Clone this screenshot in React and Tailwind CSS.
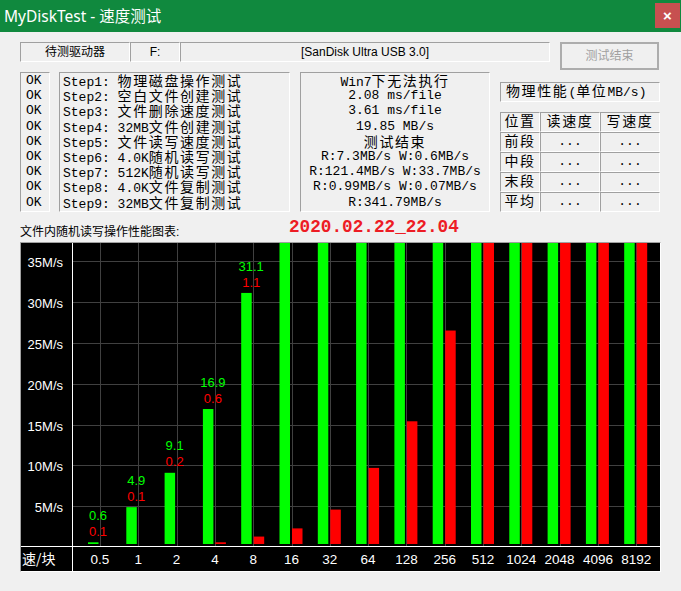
import React from 'react';

// 等宽字体：ASCII 用 Liberation Mono，中文单独放大，模拟宋体的双倍宽度
const CJK = /([\u3400-\u9fff]+)/;

const Mono = ({ text }) =>
  text.split(CJK).map((part, i) =>
    CJK.test(part) ? (
      <span key={i} className="font-['Noto_Sans_CJK_SC',sans-serif] text-[14px] leading-[14px] tracking-[1.6px]">
        {part}
      </span>
    ) : (
      <span key={i}>{part}</span>
    )
  );

const sunken = 'border border-t-[#a0a0a0] border-l-[#a0a0a0] border-b-white border-r-white';

const steps = [
  'Step1: 物理磁盘操作测试',
  'Step2: 空白文件创建测试',
  'Step3: 文件删除速度测试',
  'Step4: 32MB文件创建测试',
  'Step5: 文件读写速度测试',
  'Step6: 4.0K随机读写测试',
  'Step7: 512K随机读写测试',
  'Step8: 4.0K文件复制测试',
  'Step9: 32MB文件复制测试',
];

const results = [
  'Win7下无法执行',
  '2.08 ms/file',
  '3.61 ms/file',
  '19.85 MB/s',
  '测试结束',
  'R:7.3MB/s W:0.6MB/s',
  'R:121.4MB/s W:33.7MB/s',
  'R:0.99MB/s W:0.07MB/s',
  'R:341.79MB/s',
];

const tableRows = ['前段', '中段', '末段', '平均'];

const sizes = ['0.5', '1', '2', '4', '8', '16', '32', '64', '128', '256', '512', '1024', '2048', '4096', '8192'];
const reads = [0.6, 4.9, 9.1, 16.9, 31.1, 99, 99, 99, 99, 99, 99, 99, 99, 99, 99];
const writes = [0.1, 0.1, 0.2, 0.6, 1.3, 2.3, 4.6, 9.7, 15.4, 26.5, 99, 99, 99, 99, 99];
const valueLabels = [
  ['0.6', '0.1'],
  ['4.9', '0.1'],
  ['9.1', '0.2'],
  ['16.9', '0.6'],
  ['31.1', '1.1'],
];

const yOf = (v) => Math.max(0, 304.2 - 8.176 * v);
const xOf = (i) => 79 + 38.3 * i;

const Chart = () => {
  const ticks = [5, 10, 15, 20, 25, 30, 35];
  return (
    <svg width="639" height="328" className="block">
      <rect x="0" y="0" width="639" height="328" fill="#000" />
      {ticks.map((t) => {
        const y = Math.round(304.2 - 8.176 * t) + 0.5;
        return (
          <g key={t}>
            <line x1="52" x2="639" y1={y} y2={y} stroke="#404040" />
            <text x="42" y={y + 5.5} fill="#fff" fontSize="13" textAnchor="end" fontFamily="Liberation Sans, sans-serif">
              {t}M/s
            </text>
          </g>
        );
      })}
      {sizes.map((s, i) => {
        const x = Math.round(xOf(i)) + 0.5;
        return <line key={s} x1={x} x2={x} y1="0" y2="303" stroke="#404040" />;
      })}
      {sizes.map((s, i) => {
        const gx = xOf(i) - 12;
        const rx = xOf(i) + 0.5;
        const gTop = yOf(reads[i]);
        const rTop = yOf(writes[i]);
        return (
          <g key={s}>
            <rect x={gx} y={gTop} width="10.5" height={301 - gTop} fill="#00ff00" />
            <rect x={rx} y={rTop} width="10.5" height={301 - rTop} fill="#ff0000" />
            {valueLabels[i] && (
              <>
                <text x={xOf(i) - 2} y={gTop - 22.3} fill="#00ff00" fontSize="13" textAnchor="middle" fontFamily="Liberation Sans, sans-serif">
                  {valueLabels[i][0]}
                </text>
                <text x={xOf(i) - 2} y={gTop - 6.3} fill="#ff0000" fontSize="13" textAnchor="middle" fontFamily="Liberation Sans, sans-serif">
                  {valueLabels[i][1]}
                </text>
              </>
            )}
            <text x={xOf(i)} y="320.5" fill="#fff" fontSize="13.5" textAnchor="middle" fontFamily="Liberation Sans, sans-serif">
              {s}
            </text>
          </g>
        );
      })}
      <line x1="0" x2="639" y1="303.5" y2="303.5" stroke="#fff" />
      <line x1="51.5" x2="51.5" y1="0" y2="328" stroke="#fff" />
      <text x="1" y="320.5" fill="#fff" fontSize="14" fontFamily="Noto Sans CJK SC, sans-serif">
        速/块
      </text>
    </svg>
  );
};

const App = () => {
  return (
    <div className="w-[681px] h-[591px] bg-[#f0f0f0] overflow-hidden font-['Liberation_Sans','Noto_Sans_CJK_SC',sans-serif] text-black">
      {/* 标题栏 */}
      <div className="h-[32px] bg-[#10893e] flex items-start justify-between">
        <div className="mt-[6px] ml-[4px] h-[21px] leading-[21px] text-[15.5px] text-white font-['Noto_Sans','Noto_Sans_CJK_SC',sans-serif]">
          MyDiskTest - 速度测试
        </div>
        <div className="mt-[3px] mr-[1px] w-[25px] h-[25px] bg-[#c75050] flex items-center justify-center text-white text-[15px] font-bold leading-none">
          ×
        </div>
      </div>

      <div className="px-[20px]">
        {/* 驱动器行 */}
        <div className="mt-[10px] flex items-start">
          <div className={`${sunken} w-[110px] h-[20px] flex items-center justify-center text-[12px]`}>待测驱动器</div>
          <div className={`${sunken} w-[50px] h-[20px] flex items-center justify-center text-[12px]`}>F:</div>
          <div className={`${sunken} w-[370px] h-[20px] flex items-center justify-center text-[12px]`}>
            [SanDisk Ultra USB 3.0]
          </div>
          <div className="ml-[10px] w-[99px] h-[28px] border-2 border-[#adadad] bg-[#f0f0f0] flex items-center justify-center text-[12px] text-[#a0a0a0]">
            测试结束
          </div>
        </div>

        {/* 测试步骤 */}
        <div className="mt-[2px] flex items-start font-['Liberation_Mono',monospace] text-[13px]">
          <div className={`${sunken} w-[30px] h-[140px] pl-[5px]`}>
            {steps.map((s) => (
              <div key={s} className="h-[15.2px] leading-[15.2px]">OK</div>
            ))}
          </div>
          <div className={`${sunken} ml-[9px] w-[231px] h-[140px] pl-[3px]`}>
            {steps.map((s) => (
              <div key={s} className="h-[15.2px] leading-[15.2px] whitespace-pre">
                <Mono text={s} />
              </div>
            ))}
          </div>
          <div className={`${sunken} ml-[10px] w-[190px] h-[140px]`}>
            {results.map((r) => (
              <div key={r} className="h-[15.2px] leading-[15.2px] whitespace-pre text-center">
                <Mono text={r} />
              </div>
            ))}
          </div>
          <div className="ml-[10px] w-[160px] flex flex-col">
            <div className={`${sunken} mt-[10px] h-[20px] leading-[18px] pl-[5px] whitespace-pre`}>
              <Mono text="物理性能(单位MB/s)" />
            </div>
            <div className="mt-[10px] flex flex-col">
              <div className="flex">
                <div className={`${sunken} w-[40px] h-[20px] leading-[18px] text-center`}><Mono text="位置" /></div>
                <div className={`${sunken} w-[60px] h-[20px] leading-[18px] text-center`}><Mono text="读速度" /></div>
                <div className={`${sunken} w-[60px] h-[20px] leading-[18px] text-center`}><Mono text="写速度" /></div>
              </div>
              {tableRows.map((r) => (
                <div key={r} className="flex">
                  <div className={`${sunken} w-[40px] h-[20px] leading-[18px] text-center`}><Mono text={r} /></div>
                  <div className={`${sunken} w-[60px] h-[20px] leading-[18px] text-center`}>...</div>
                  <div className={`${sunken} w-[60px] h-[20px] leading-[18px] text-center`}>...</div>
                </div>
              ))}
            </div>
          </div>
        </div>

        {/* 图表标题 */}
        <div className="h-[30px] flex items-start">
          <div className="w-[269px] mt-[12px] leading-[16px] text-[12px]">文件内随机读写操作性能图表:</div>
          <div className="mt-[5px] leading-[20px] text-[17.7px] font-bold text-[#ed1c24] font-['Liberation_Mono',monospace]">
            2020.02.22_22.04
          </div>
        </div>

        {/* 图表 */}
        <div className={`${sunken} w-[641px] h-[330px] bg-black`}>
          <Chart />
        </div>
      </div>
    </div>
  );
};

export default App;
